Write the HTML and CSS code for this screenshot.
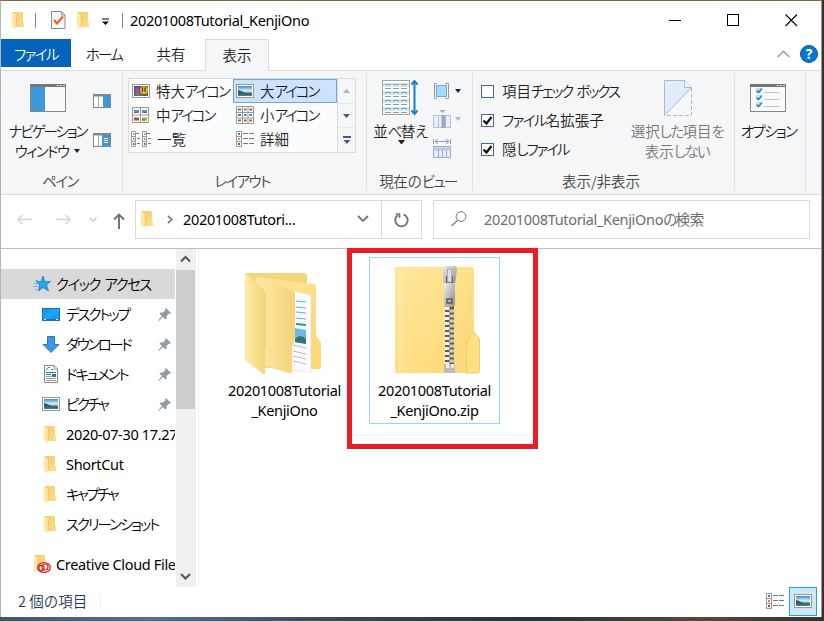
FILE: index.html
```html
<!DOCTYPE html>
<html lang="ja">
<head>
<meta charset="utf-8">
<title>20201008Tutorial_KenjiOno</title>
<link rel="stylesheet" href="styles.css">
</head>
<body>

<!-- shared icons -->
<svg width="0" height="0" class="defs">
  <defs>
    <linearGradient id="gold" x1="0" y1="0" x2="1" y2="1"><stop offset="0" stop-color="#ffe79d"/><stop offset="1" stop-color="#fdd772"/></linearGradient>
    <linearGradient id="goldside" x1="0" y1="0" x2="1" y2="0"><stop offset="0" stop-color="#ffe9a6"/><stop offset="1" stop-color="#f5d37a"/></linearGradient>
    <linearGradient id="small" x1="0" y1="0" x2="1" y2="1"><stop offset="0" stop-color="#f0cc70"/><stop offset="1" stop-color="#ffde85"/></linearGradient>
    <linearGradient id="sky" x1="0" y1="0" x2="0" y2="1"><stop offset="0" stop-color="#3c86dc"/><stop offset=".5" stop-color="#e4f4fb"/><stop offset=".75" stop-color="#3d7668"/><stop offset="1" stop-color="#3584bb"/></linearGradient>
    <linearGradient id="metal" x1="0" y1="0" x2="1" y2="1"><stop offset="0" stop-color="#f0f0f0"/><stop offset=".5" stop-color="#bcbcbc"/><stop offset="1" stop-color="#8d8d8d"/></linearGradient>
    <linearGradient id="screen" x1="0" y1="0" x2="1" y2="1"><stop offset="0" stop-color="#0d8bea"/><stop offset=".5" stop-color="#23a5fb"/><stop offset="1" stop-color="#0b8df0"/></linearGradient>
  </defs>
  <symbol id="folder" viewBox="0 0 13 17">
    <path d="M1 0H11V10L12 11V15H1Z" fill="url(#small)"/>
    <path d="M0 .5L4 2.500V17L0 15Z" fill="#ffe8a3"/>
    <path d="M4.200 3V15" stroke="#eac163" stroke-width=".7"/>
  </symbol>
  <symbol id="picture" viewBox="0 0 18 14">
    <rect x=".5" y=".5" width="17" height="13" fill="#fff" stroke="#999"/>
    <rect x="2" y="2" width="14" height="10" fill="url(#sky)"/>
    <path d="M2 6C5 6 7 9 13 9.500L16 10V10.500H2Z" fill="#346457"/>
  </symbol>
  <symbol id="pin" viewBox="0 0 13 13">
    <path d="M8 0L13 5L11.800 6L11 5.600L8.600 8L8.600 10.600L7.500 11.500L5 9L.6 13L0 12.400L4 8L1.500 5.500L2.500 4.500L5 4.500L7.500 2L7 1Z" fill="#8f9ba6"/>
  </symbol>
  <symbol id="list" viewBox="0 0 9 16">
    <path d="M.5 .5H4.500V15.500H.5ZM.5 5.500H4.500M.5 10.500H4.500" fill="#fff" stroke="#999"/>
    <path d="M5 2.500H8M6 7.500H9M6 12.500H9" stroke="#777"/>
    <path d="M2 3H3.500" stroke="#3480b8" stroke-width="1.500"/><path d="M2 8H3.500" stroke="#457a48" stroke-width="1.500"/><path d="M2 13H3.500" stroke="#c13520" stroke-width="2"/>
  </symbol>
  <symbol id="details" viewBox="0 0 18 16">
    <path d="M.5 .5H5.500V15.500H.5ZM.5 5.500H5.500M.5 10.500H5.500" fill="#fff" stroke="#999"/>
    <path d="M7 2.500H12M13 2.500H18M7 7.500H12M13 7.500H18M7 12.500H12M13 12.500H18" stroke="#777"/>
    <path d="M2 3H4" stroke="#3480b8" stroke-width="2"/><path d="M2 8H4" stroke="#d08b38" stroke-width="2"/><path d="M2 13H4" stroke="#c13520" stroke-width="2"/>
  </symbol>
</svg>

<div class="window">

  <div class="titlebar">
    <svg class="tb-folder" width="13" height="17"><use href="#folder"/></svg>
    <span class="tb-line"></span>
    <svg class="tb-check" width="15" height="18"><path d="M.5 .5H10.500L14 4V17.500H.5Z" fill="#f5f6f7" stroke="#8b8b8b"/><path d="M10.500 .5V4H14" fill="none" stroke="#999"/><path d="M3 9L6 12.500L12 5.500" fill="none" stroke="#f35b1c" stroke-width="2"/></svg>
    <svg class="tb-folder2" width="13" height="17"><use href="#folder"/></svg>
    <svg class="tb-down" width="7" height="7"><path d="M0 1H7" stroke="#000"/><path d="M0 3.500H7L3.500 7Z"/></svg>
    <span class="tb-line second"></span>
    <span class="title latin">20201008Tutorial_KenjiOno</span>
    <div class="controls">
      <svg width="13" height="13"><path d="M0 6.500H12" stroke="#000"/></svg>
      <svg width="13" height="13"><rect x=".5" y=".5" width="11" height="11" fill="none" stroke="#000"/></svg>
      <svg width="13" height="13"><path d="M.5 .5L12 12M12 .5L.5 12" stroke="#000" stroke-width="1.100"/></svg>
    </div>
  </div>

  <div class="tabs">
    <div class="tab file"><span class="k">ファイル</span></div>
    <div class="tab home"><span class="k">ホーム</span></div>
    <div class="tab share">共有</div>
    <div class="tab view">表示</div>
    <div class="tabs-right">
      <svg width="13" height="8"><path d="M.7 7L6.500 1.200L12.300 7" fill="none" stroke="#999" stroke-width="1.400"/></svg>
      <span class="help">?</span>
    </div>
  </div>

  <div class="ribbon">
    <div class="group panes">
      <div class="group-body">
        <div class="big">
          <svg width="36" height="28"><rect x=".5" y=".5" width="35" height="27" fill="#fafafa" stroke="#868686"/><path d="M0 1.500H36" stroke="#777" stroke-width="3"/><path d="M27 1.500H29M30 1.500H32M33 1.500H35" stroke="#ddd"/><rect x="1" y="3" width="14" height="24" fill="#3e98de"/></svg>
          <div class="lines"><span class="k tight">ナビゲーション</span><br><span class="k">ウィンドウ</span><i class="arrow"></i></div>
        </div>
        <div class="small-icons">
          <svg width="18" height="14"><rect x=".5" y=".5" width="17" height="13" fill="#fff" stroke="#868686"/><path d="M0 1.500H18" stroke="#868686" stroke-width="2"/><path d="M5.500 2V13" stroke="#aaa"/><rect x="10" y="2" width="7" height="11" fill="#3e98de"/></svg>
          <svg width="18" height="14"><rect x=".5" y=".5" width="17" height="13" fill="#fff" stroke="#868686"/><path d="M0 1.500H18" stroke="#868686" stroke-width="2"/><path d="M5.500 2V13" stroke="#aaa"/><rect x="9" y="2" width="8" height="11" fill="#3e98de"/><path d="M11 5.500H15M11 7.500H15M11 9.500H15" stroke="#fff"/></svg>
        </div>
      </div>
      <div class="group-label"><span class="k">ペイン</span></div>
    </div>

    <div class="group layout">
      <div class="group-body">
        <div class="gallery">
          <div class="cell"><svg width="18" height="14"><rect x=".5" y=".5" width="17" height="13" fill="#fff" stroke="#999"/><rect x="2" y="2" width="14" height="10" fill="#3158c4"/><path d="M2 9H16V12H2Z" fill="#3a8a3c"/><circle cx="5" cy="6" r="2.200" fill="#d84438"/><circle cx="6" cy="9.500" r="2" fill="#a652c8"/><circle cx="12" cy="6" r="4" fill="#e6ba1c"/><path d="M10.500 3V8M13 3V8" stroke="#352b1a"/><path d="M11 11H14" stroke="#d22" stroke-width="2"/></svg>特大<span class="k tight">アイコン</span></div>
          <div class="cell selected"><svg width="18" height="14"><use href="#picture"/></svg>大<span class="k tight">アイコン</span></div>
          <div class="cell"><svg width="18" height="16"><path d="M.5 .5H16.500V15.500H.5ZM8.500 .5V15.500M.5 8H16.500" fill="#fff" stroke="#999"/><path d="M2 4.500H7M10 4.500H15" stroke="#4b94c9" stroke-width="3"/><path d="M2 12H7" stroke="#bc4b2f" stroke-width="3"/><path d="M10 12H15" stroke="#c99a2d" stroke-width="3"/><path d="M2 5.500H5M12 5.500H15M10 13H13" stroke="#397548"/></svg>中<span class="k tight">アイコン</span></div>
          <div class="cell"><svg width="18" height="18"><path d="M.5 .5H17.500V17.500H.5ZM6.500 .5V17.500M12 .5V17.500M.5 6.500H17.500M.5 12H17.500" fill="#fff" stroke="#999"/><path d="M2 3.500H5M8 9H10.500M13.500 9H16" stroke="#3c82c0" stroke-width="2"/><path d="M8 3.500H10.500M2 9H5M2 14.500H5" stroke="#5b8a46" stroke-width="2"/><path d="M13.500 3.500H16M8 14.500H10.500M13.500 14.500H16" stroke="#c23f24" stroke-width="2"/></svg>小<span class="k tight">アイコン</span></div>
          <div class="cell"><svg width="9" height="16" class="list1"><use href="#list"/></svg><svg width="9" height="16" class="list2"><use href="#list"/></svg>一覧</div>
          <div class="cell"><svg width="18" height="16"><use href="#details"/></svg>詳細</div>
        </div>
        <div class="gallery-scroll">
          <div><svg width="7" height="4"><path d="M0 4L3.500 0L7 4Z" fill="#a8b0bd"/></svg></div>
          <div><svg width="7" height="4"><path d="M0 0H7L3.500 4Z" fill="#44597c"/></svg></div>
          <div><svg width="8" height="8"><path d="M0 1H8" stroke="#44597c" stroke-width="2"/><path d="M.5 4H7.500L4 8Z" fill="#44597c"/></svg></div>
        </div>
      </div>
      <div class="group-label layout-label"><span class="k">レイアウト</span></div>
    </div>

    <div class="group current">
      <div class="group-body">
        <div class="sort">
          <svg width="36" height="36"><rect x=".5" y=".5" width="27" height="34" fill="#fff" stroke="#a5a5a5"/><path d="M1 5H27M1 13H27M1 21H27M1 29H27" stroke="#c9e8f3" stroke-width="4"/><path d="M3 4.500H25M3 8.500H25M3 12.500H25M3 16.500H25M3 20.500H25M3 24.500H25M3 28.500H25M3 32.500H25" stroke="#999" stroke-dasharray="6 2"/><path d="M32.500 2V33" stroke="#1d7dcc" stroke-width="2"/><path d="M29.500 4.500L32.500 1L35.500 4.500M29.500 30.500L32.500 34L35.500 30.500" fill="none" stroke="#1d7dcc" stroke-width="2"/></svg>
          <div class="sort-text">並<span class="k">べ</span>替<span class="k">え</span></div>
          <i class="arrow"></i>
        </div>
        <div class="view-icons">
          <div><svg width="18" height="16"><path d="M4 .5H1.500V15.500H4M12.500 .5H15.500V15.500H12.500" fill="none" stroke="#999"/><rect x="3.500" y="2.500" width="10" height="11" fill="#a9d9fa" stroke="#5faee5"/></svg><i class="arrow"></i></div>
          <div class="mid"><svg width="18" height="18"><path d="M6 0H13L9.500 3Z" fill="#9fb1d0"/><rect x=".5" y="5.500" width="17" height="12" fill="#e9effa" stroke="#b4c1da"/><path d="M5.500 5V18M12.500 5V18" stroke="#b4c1da"/><path d="M10.500 5V18" stroke="#98a9c7" stroke-width="4"/></svg><i class="arrow dim"></i></div>
          <div><svg width="18" height="19"><path d="M.5 0V5M17.500 0V5M2 2.500H16M5 0L2 2.500L5 5M13 0L16 2.500L13 5" fill="none" stroke="#8a9bbb"/><rect x=".5" y="7.500" width="17" height="11" fill="#e9effa" stroke="#9baac6"/><path d="M0 10H18" stroke="#b9c6de" stroke-width="3"/><path d="M5.500 11V18M9.500 11V18M13.500 11V18" stroke="#9baac6"/></svg></div>
        </div>
      </div>
      <div class="group-label cur-label">現在の<span class="k">ビュー</span></div>
    </div>

    <div class="group showhide">
      <div class="group-body">
        <div class="checks">
          <label><i class="box"></i>項目<span class="k tight">チェック ボックス</span></label>
          <label><i class="box"><svg width="11" height="11"><path d="M1.500 5.500L4.500 8.500L9.500 2" fill="none" stroke="#111" stroke-width="2.200"/></svg></i><span class="k">ファイル</span>名拡張子</label>
          <label><i class="box"><svg width="11" height="11"><path d="M1.500 5.500L4.500 8.500L9.500 2" fill="none" stroke="#111" stroke-width="2.200"/></svg></i>隠<span class="k tight">しファイル</span></label>
        </div>
        <div class="hide-items">
          <svg width="28" height="36"><path d="M.5 .5H20.500L27.500 7.500L.5 35.500Z" fill="#e3ecfa" stroke="#a9b9d4"/><path d="M20.500 .5V7.500H27.500" fill="#f0f4fb" stroke="#a9b9d4"/><path d="M27.500 8V35.500H0" fill="none" stroke="#a9b9d4" stroke-dasharray="4 2"/></svg>
          <div class="lines">選択<span class="k">した</span>項目<span class="k">を</span><br>表示<span class="k">しない</span></div>
        </div>
      </div>
      <div class="group-label show-label">表示/非表示</div>
    </div>

    <div class="group options">
      <div class="group-body">
        <svg width="36" height="28"><rect x=".5" y=".5" width="35" height="27" fill="#fafafa" stroke="#868686"/><path d="M0 1.500H36" stroke="#777" stroke-width="3"/><path d="M27 1.500H29M30 1.500H32M33 1.500H35" stroke="#ddd"/><path d="M6 4H11V9H6ZM6 11H11V16H6ZM6 18H11V23H6Z" fill="#dcdcdc"/><path d="M6.500 6.500L8.500 8.500L12 4.500M6.500 13.500L8.500 15.500L12 11.500M6.500 20.500L8.500 22.500L12 18.500" fill="none" stroke="#258bd8" stroke-width="1.700"/><path d="M14 8.500H30M14 15.500H30M14 22.500H30" stroke="#c4c4c4"/></svg>
        <div class="lines"><span class="k">オプション</span></div>
      </div>
    </div>
  </div>

  <div class="addressbar">
    <div class="arrows">
      <svg class="back" width="15" height="11"><path d="M15 5.500H1M5.500 1L1 5.500L5.500 10" fill="none" stroke="#d5d5d5" stroke-width="1.400"/></svg>
      <svg class="forward" width="15" height="11"><path d="M0 5.500H14M9.500 1L14 5.500L9.500 10" fill="none" stroke="#d5d5d5" stroke-width="1.400"/></svg>
      <svg class="recent" width="8" height="6"><path d="M.5 .7L4 4.200L7.500 .7" fill="none" stroke="#c8c8c8" stroke-width="1.500"/></svg>
      <svg class="up" width="12" height="16"><path d="M6 16V1.500M1 6.500L6 1.500L11 6.500" fill="none" stroke="#6e6e6e" stroke-width="1.900"/></svg>
    </div>
    <div class="path">
      <svg width="13" height="17"><use href="#folder"/></svg>
      <svg class="chev" width="6" height="9"><path d="M1 .8L4.700 4.500L1 8.200" fill="none" stroke="#777" stroke-width="1.700"/></svg>
      <span class="latin">20201008Tutori...</span>
      <svg class="drop" width="12" height="8"><path d="M1 1L6 6L11 1" fill="none" stroke="#777" stroke-width="1.900"/></svg>
      <div class="reload"><svg width="15" height="16"><path d="M9.500 2.300A6.200 6.200 0 1 1 4 3" fill="none" stroke="#777" stroke-width="1.900"/><path d="M1.500 2H5.500V6" fill="none" stroke="#777" stroke-width="1.700"/></svg></div>
    </div>
    <div class="search">
      <svg width="16" height="16"><circle cx="10" cy="5.500" r="4.900" fill="none" stroke="#777"/><path d="M6.500 9.500L.5 15" stroke="#777" stroke-width="1.200"/></svg>
      <span class="latin">20201008Tutorial_KenjiOno<span class="cjk"><span class="k">の</span>検索</span></span>
    </div>
  </div>

  <div class="main">
    <div class="nav">
      <div class="item top"><svg width="18" height="16"><path d="M10 0L12 5.500H17.500L13.500 9L15.500 15L10 11.500L5.500 15L6.500 9L3.500 5.500H8Z" fill="#2ba2ec" stroke="#1479c4" stroke-width=".7"/><path d="M2 4.500H5M1 7.500H5M0 10.500H5M2 13.500H4" stroke="#53b7f3"/></svg><span class="k">クイック アクセス</span></div>
      <div class="item"><svg width="18" height="13"><rect x=".5" y=".5" width="17" height="12" fill="url(#screen)" stroke="#1477bd"/><path d="M1 11.500H17" stroke="#0877ca"/><path d="M2 11.500H4M14 11.500H16" stroke="#fff"/></svg><span class="k tight">デスクトップ</span><svg class="pin" width="13" height="13"><use href="#pin"/></svg></div>
      <div class="item"><svg width="18" height="17"><path d="M5.500 .5H12.500V8.500H17L9 16.500L1 8.500H5.500Z" fill="#3c96e2" stroke="#2879c5"/></svg><span class="k tighter">ダウンロード</span><svg class="pin" width="13" height="13"><use href="#pin"/></svg></div>
      <div class="item"><svg width="18" height="18"><path d="M2.500 .5H12L15.500 4V17.500H2.500Z" fill="#fff" stroke="#888"/><path d="M12 .5V4H15.500" fill="none" stroke="#999"/><path d="M4 5.500L6 2.500H8M4 7.500H14M9 4.500H11M4 9.500H9" fill="none" stroke="#1c87cd"/><path d="M4 11.500H9M4 13.500H14M4 15.500H14" stroke="#999"/><rect x="10" y="9" width="4" height="3" fill="#45708f"/></svg><span class="k tight">ドキュメント</span><svg class="pin" width="13" height="13"><use href="#pin"/></svg></div>
      <div class="item"><svg width="18" height="14"><use href="#picture"/></svg><span class="k tighter">ピクチャ</span><svg class="pin" width="13" height="13"><use href="#pin"/></svg></div>
      <div class="item"><svg class="f" width="13" height="17"><use href="#folder"/></svg><span class="latin">2020-07-30 17.27</span></div>
      <div class="item"><svg class="f" width="13" height="17"><use href="#folder"/></svg><span class="latin">ShortCut</span></div>
      <div class="item"><svg class="f" width="13" height="17"><use href="#folder"/></svg><span class="k tighter">キャプチャ</span></div>
      <div class="item"><svg class="f" width="13" height="17"><use href="#folder"/></svg><span class="k tight">スクリーンショット</span></div>
      <div class="item top cloud"><svg width="18" height="18"><path d="M1 0H12V16H1Z" fill="url(#small)"/><path d="M1 0L4 2V17L1 15Z" fill="#ffe9a6"/><ellipse cx="11" cy="12.500" rx="6.300" ry="4.800" fill="#fff" stroke="#d9201a" stroke-width="1.300"/><circle cx="8.500" cy="13" r="2.700" fill="none" stroke="#d9201a" stroke-width="1.200"/><circle cx="12" cy="12" r="3" fill="none" stroke="#d9201a" stroke-width="1.200"/></svg><span class="latin">Creative Cloud Files</span></div>
    </div>
    <div class="scrollbar">
      <svg width="11" height="8"><path d="M1 6.500L5.500 2L10 6.500" fill="none" stroke="#555" stroke-width="2"/></svg>
      <div class="thumb"></div>
      <svg class="sb-down" width="11" height="8"><path d="M1 1L5.500 5.500L10 1" fill="none" stroke="#555" stroke-width="2"/></svg>
    </div>

    <div class="files">
      <div class="entry">
        <svg width="78" height="103">
          <path d="M0 0H60L62 2V95H10Z" fill="#f3d679"/>
          <path d="M12 4L68 11Q71 11 71 14V63L76 69V94Q76 96 74 96L40 98Z" fill="url(#gold)"/>
          <path d="M45 17L66 22V100L46 97Z" fill="#fafafa" stroke="#ddd" stroke-width=".6"/>
          <path d="M51 28L61 29M51 34L61 35M51 39L61 40M51 45L61 46" stroke="#60b1dd"/>
          <path d="M51 51L61 52" stroke="#2591d0" stroke-width="2"/>
          <path d="M50 55L61 57V71L50 69Z" fill="#6cb8e6"/><path d="M50 66Q55 60 61 66V71L50 69Z" fill="#357278"/>
          <path d="M48 72L61 75M48 78L61 81M48 83L61 86M48 88L61 91" stroke="#bbb"/>
          <path d="M11 4L47 17Q50 18 50 21V66L47 73V98Q47 101 44 100L12 91Z" fill="url(#goldside)"/>
          <path d="M36 26V67L34 73V97" fill="none" stroke="#f8da87" stroke-width="1.500"/>
          <path d="M0 0L18 15Q21 18 21 22V73L20 76V101L18 101L0 87Z" fill="url(#goldside)"/>
        </svg>
        <div class="name latin">20201008Tutorial<br>_KenjiOno</div>
      </div>
      <div class="entry zip">
        <svg width="85" height="108">
          <path d="M0 1H76Q79 1 79 4V66L85 73V105Q85 107 83 107H0Z" fill="url(#gold)"/>
          <path d="M4.500 5V106M6.500 5V106" stroke="#fff0b8" stroke-width=".6"/>
          <path d="M71.500 107V74L79 66L84.500 73V105L83 107Z" fill="#ffdf84" stroke="#f2cc69"/>
          <path d="M54.500 38V102" stroke="#6b5c38" stroke-width="9"/>
          <path d="M52 41V100" stroke="#eee" stroke-width="5" stroke-dasharray="3 2"/>
          <path d="M57 43.500V100" stroke="#ccc" stroke-width="5" stroke-dasharray="3 2"/>
          <path d="M47 2Q47 0 50 0H59Q62 0 62 3L60 18H49Z" fill="url(#metal)"/>
          <path d="M51 10H58V17H51Z" fill="#666"/>
          <path d="M52.500 3H56.500V16H52.500Z" fill="#ddd" stroke="#aaa"/>
          <path d="M49 17H60V37Q60 41 57 41H52Q49 41 49 38Z" fill="url(#metal)"/>
          <path d="M52 33H57V37H52Z" fill="#b9b38d" stroke="#595959" stroke-width="1.500"/>
          <path d="M49 98H60V107H49Z" fill="#bcbcbc"/><path d="M51 98H54V102H51ZM56 98H59V102H56Z" fill="#ececec"/>
        </svg>
        <div class="name latin">20201008Tutorial<br>_KenjiOno.zip</div>
        <div class="marker"></div>
      </div>
    </div>
  </div>

  <div class="status">
    <span class="count">2 個の項目</span>
    <div class="modes">
      <svg width="18" height="16"><use href="#details"/></svg>
      <div class="mode-on"><svg width="18" height="14"><use href="#picture"/></svg></div>
    </div>
  </div>
</div>
</body>
</html>
```

FILE: styles.css
```css
* {
	box-sizing: border-box;
}
body {
	margin: 0;
	width: 824px;
	height: 621px;
	overflow: hidden;
	/* strip of wallpaper behind the window */
	background: linear-gradient(90deg, #46545f, #53718a 18%, #3d4850 40%, #29313a 65%, #5b4638 85%, #39302d);
	font-family: "Noto Sans CJK JP", sans-serif;
	font-weight: 350;
	font-size: 14.5px;
	line-height: 20px;
	color: #1c1c1c;
}
svg {
	display: block;
	flex: none;
}
.defs {
	position: absolute;
}
.window {
	width: 822px;
	height: 617px;
	background: #fff;
	border-top: 1px solid #8b6248;
	border-left: 1px solid #b5b5b5;
	border-right: 1px solid #9b9b9b;
	display: flex;
	flex-direction: column;
	overflow: hidden;
	white-space: nowrap;
}
/* narrow kana */
.k {
	font-feature-settings: "palt";
	letter-spacing: -1.6px;
	word-spacing: 3px;
}
.k.tight {
	letter-spacing: -2.1px;
}
.k.tighter {
	letter-spacing: -2.5px;
}
.latin {
	font-family: "Noto Sans", "Noto Sans CJK JP", sans-serif;
	font-weight: 400;
	font-size: 14.5px;
	letter-spacing: -0.33px;
	color: #000;
}
.arrow {
	display: inline-block;
	border: 3.5px solid transparent;
	border-top: 4px solid #222;
	border-bottom: 0;
}
.arrow.dim {
	border-top-color: #b8b8b8;
}

/* title */
.titlebar {
	height: 38px;
	display: flex;
	align-items: center;
	padding: 0 23px 0 11px;
}
.tb-line {
	width: 1px;
	height: 15px;
	background: #888;
	margin: 0 15px 0 10px;
}
.tb-folder2 {
	margin: 0 12px 0 11px;
}
.tb-down {
	margin-top: 3px;
}
.tb-line.second {
	margin: 0 7px 0 13px;
}
.controls {
	margin-left: auto;
	display: flex;
	gap: 45px;
}

/* tabs */
.tabs {
	height: 32px;
	display: flex;
	border-bottom: 1px solid #dadbdc;
}
.tab {
	height: 28px;
	line-height: 29px;
	text-align: center;
}
.file {
	width: 70px;
	background: #0563bb;
	color: #fff;
}
.home {
	width: 66px;
}
.share {
	width: 68px;
}
.view {
	width: 64px;
	height: 32px;
	background: #f5f6f7;
	border: 1px solid #dadbdc;
	border-bottom: 0;
}
.tabs-right {
	margin-left: auto;
	height: 29px;
	display: flex;
	align-items: center;
	gap: 10px;
	padding-right: 3px;
}
.help {
	width: 18px;
	height: 18px;
	border-radius: 9px;
	background: #0877d1;
	border: 1px solid #0758a6;
	color: #fff;
	font: bold 14px/16px "Open Sans", sans-serif;
	text-align: center;
}

/* ribbon */
.ribbon {
	height: 124px;
	background: #f5f6f7;
	border-bottom: 1px solid #dadbdc;
	display: flex;
	padding: 2px 0 3px;
}
.group {
	border-right: 1px solid #dfe0e1;
	display: flex;
	flex-direction: column;
	justify-content: space-between;
}
.group-body {
	display: flex;
}
.group-label {
	text-align: center;
	color: #444;
	padding-right: 3px;
}
.layout-label {
	padding-right: 5px;
}
.cur-label {
	letter-spacing: -0.3px;
}
.show-label {
	padding-right: 5px;
}
.lines {
	text-align: center;
}
.panes {
	width: 122px;
}
.big {
	width: 93px;
	padding: 11px 0 0 0;
}
.big svg {
	margin: 0 0 9px 29px;
}
.big .arrow {
	margin: 0 0 4px 6px;
}
.small-icons {
	padding-top: 21px;
	display: flex;
	flex-direction: column;
	gap: 25px;
	margin-left: -1px;
}
.layout {
	width: 244px;
}
.layout .group-body {
	padding: 5px 0 0 5px;
}
.gallery {
	width: 210px;
	height: 75px;
	border: 1px solid #dadbdc;
	background: #fbfcfd;
	display: grid;
	grid-template-columns: 104px 104px;
	grid-template-rows: repeat(3, 24px);
}
.cell {
	display: flex;
	align-items: center;
	padding-left: 3px;
}
.cell svg {
	margin-right: 6px;
}
.cell:nth-child(even) {
	padding-left: 3px;
}
.cell.selected {
	background: #cce4fb;
	border: 1px solid #66a7e8;
	padding-left: 2px;
}
.cell .list1 {
	margin: 0 2px 0 -1px;
}
.gallery-scroll {
	width: 18px;
	height: 75px;
	border: 1px solid #dadbdc;
	border-left: 0;
}
.gallery-scroll div {
	height: 24px;
	display: flex;
	align-items: center;
	justify-content: center;
}
.gallery-scroll div + div {
	border-top: 1px solid #e6e7e8;
}
.current {
	width: 106px;
}
.sort {
	width: 66px;
	padding-top: 7px;
	text-align: center;
}
.sort svg {
	margin: 0 0 5px 15px;
}
.sort .arrow {
	display: block;
	width: 7px;
	margin: -1px 0 0 31px;
}
.view-icons {
	padding-top: 10px;
}
.view-icons div {
	display: flex;
	align-items: center;
	gap: 4px;
}
.view-icons .mid {
	margin: 11px 0;
}
.showhide {
	width: 262px;
}
.checks {
	width: 157px;
	padding: 8px 0 0 8px;
}
.checks label {
	display: flex;
	align-items: center;
	height: 20px;
	margin-bottom: 9px;
}
.box {
	width: 13px;
	height: 13px;
	border: 1px solid #44699c;
	background: #fff;
	margin-right: 8px;
}
.hide-items {
	color: #777;
	width: 94px;
	padding-top: 7px;
}
.hide-items svg {
	margin: 0 0 5px 34px;
}
.options {
	width: 71px;
}
.options .group-body {
	display: block;
	padding-top: 11px;
}
.options svg {
	margin: 0 0 9px 15px;
}
.options .lines {
	margin-right: 3px;
}

/* address */
.addressbar {
	height: 54px;
	display: flex;
	align-items: center;
	padding-bottom: 4px;
	border-bottom: 1px solid #c0c0c0;
}
.arrows {
	width: 134px;
	display: flex;
	align-items: center;
	padding-left: 16px;
}
.forward {
	margin-left: 24px;
}
.recent {
	margin-left: 18px;
}
.up {
	margin: 2px 0 0 16px;
}
.path {
	width: 287px;
	height: 39px;
	border: 1px solid #d9d9d9;
	display: flex;
	align-items: center;
	padding: 0 0 1px 5px;
}
.chev {
	margin: 0 10px 0 13px;
}
.drop {
	margin-left: auto;
}
.reload {
	width: 40px;
	height: 37px;
	border-left: 1px solid #d9d9d9;
	margin: 1px 0 0 12px;
	display: flex;
	align-items: center;
	justify-content: center;
}
.search {
	width: 377px;
	height: 39px;
	border: 1px solid #d9d9d9;
	margin-left: 11px;
	display: flex;
	align-items: center;
	padding: 0 0 1px 17px;
	gap: 17px;
}
.search .latin {
	color: #6d6d6d;
}
.cjk {
	font-family: "Noto Sans CJK JP", sans-serif;
}

/* content */
.main {
	height: 338px;
	display: flex;
}
.nav {
	width: 175px;
	padding-top: 20px;
	overflow: hidden;
	color: #000;
}
.item {
	height: 30px;
	width: 174px;
	display: flex;
	align-items: center;
	padding-left: 41px;
	overflow: hidden;
}
.item span {
	margin-left: 6px;
}
.item.top {
	padding-left: 32px;
	background: #d9d9d9;
}
.item.top span {
	margin-left: 5px;
}
.item .f {
	margin: 0 3px 0 2px;
}
.item.cloud {
	margin-top: 10px;
	background: none;
}
.pin {
	margin-left: auto;
	margin-right: 4px;
}
.scrollbar {
	width: 20px;
	background: #f0f0f0;
	padding: 6px 1px 0 0;
	display: flex;
	flex-direction: column;
	align-items: center;
}
.thumb {
	width: 19px;
	height: 139px;
	margin-top: 7px;
	background: #cdcdcd;
}
.sb-down {
	margin-top: auto;
	margin-bottom: 6px;
}
.files {
	flex: 1;
	margin-left: 2px;
	border-left: 1px solid #f0f0f0;
	padding: 8px 0 0 20px;
	display: flex;
	align-items: flex-start;
	gap: 19px;
}
.entry {
	width: 131px;
	height: 167px;
	border: 1px solid transparent;
	display: flex;
	flex-direction: column;
	align-items: center;
	position: relative;
	padding-top: 15px;
}
.entry > svg {
	margin-right: 2px;
}
.entry.zip {
	border-color: #99d1ff;
	padding-top: 8px;
}
.entry.zip > svg {
	margin: 0 0 0 6px;
}
.name {
	text-align: center;
	margin-top: 4px;
}
.zip .name {
	margin-top: 6px;
}
/* red frame around the zip */
.marker {
	position: absolute;
	left: -23px;
	top: -10px;
	width: 191px;
	height: 201px;
	border: 5px solid #ed1c24;
}

/* status */
.status {
	height: 30px;
	display: flex;
	align-items: center;
	justify-content: space-between;
	padding: 0 4px 2px 17px;
	color: #24375c;
}
.count {
	padding-right: 13px;
	border-right: 1px solid #eee;
	line-height: 14px;
}
.modes {
	display: flex;
	align-items: center;
	gap: 5px;
}
.mode-on {
	width: 28px;
	height: 29px;
	background: #cce8f7;
	border: 1px solid #26a0da;
	display: flex;
	align-items: center;
	justify-content: center;
}
```
